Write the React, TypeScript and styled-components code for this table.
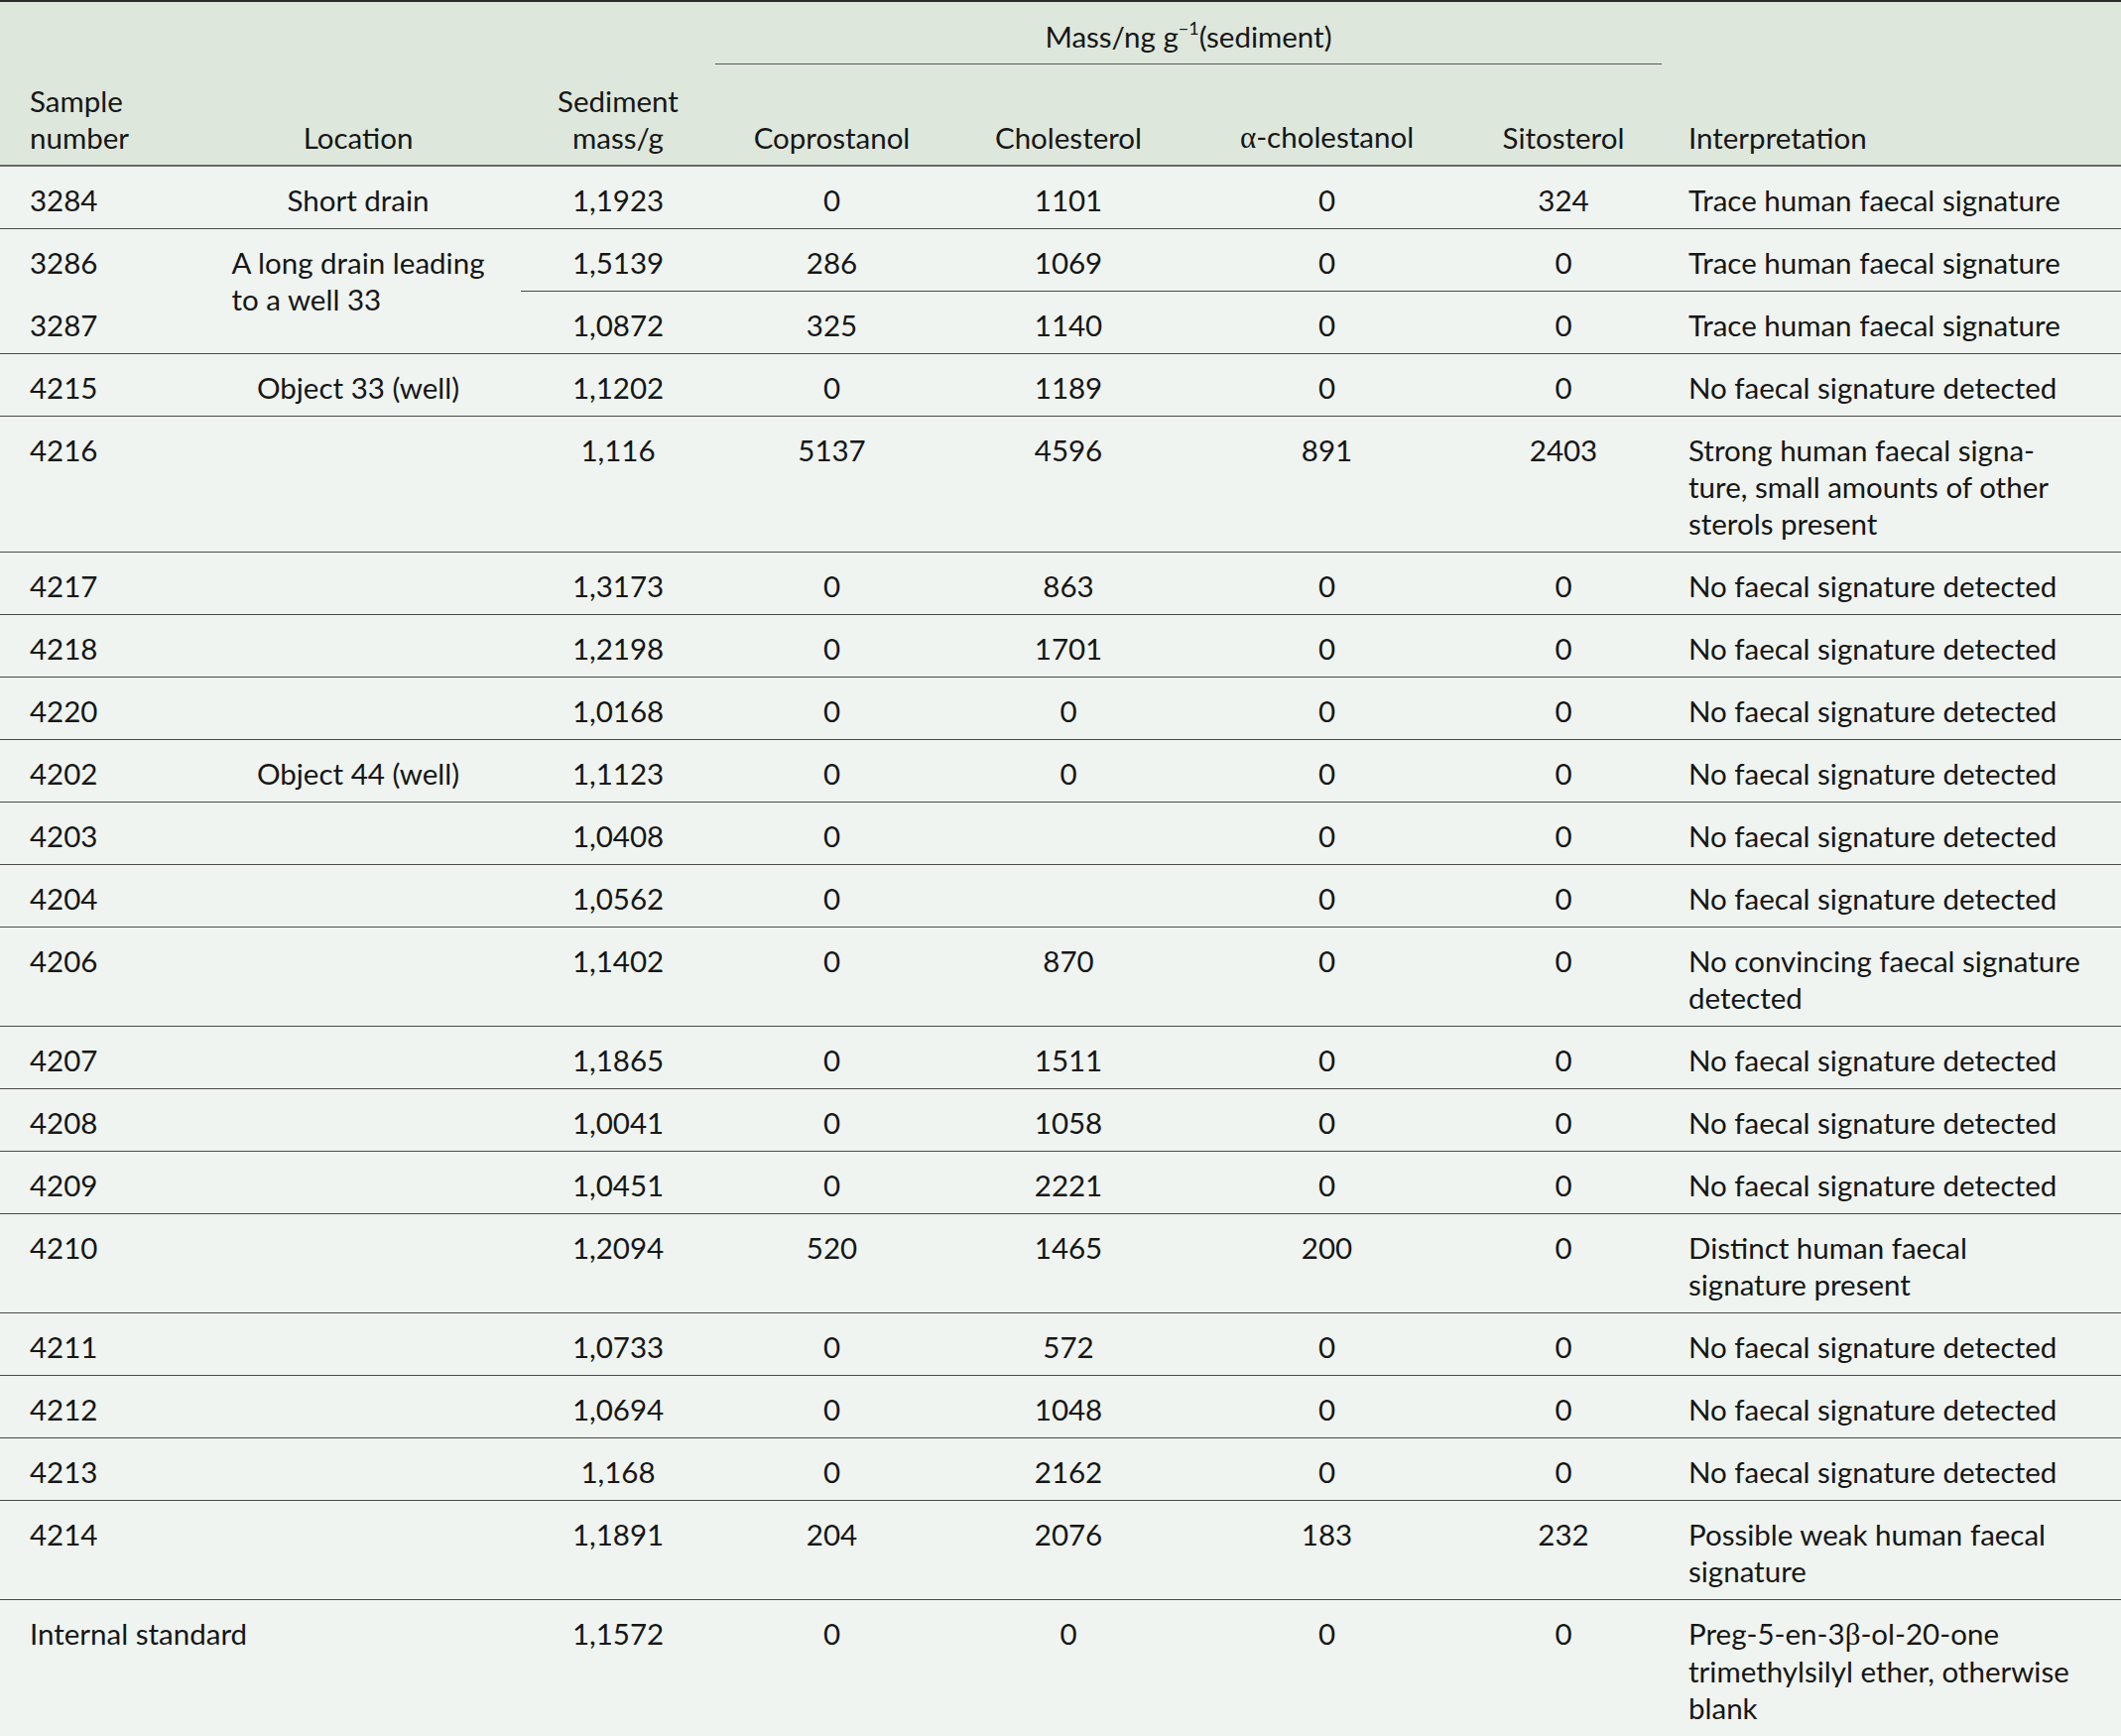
import React from "react";
import styled, { createGlobalStyle } from "styled-components";

const Global = createGlobalStyle`
  html, body { margin: 0; padding: 0; background: #ffffff; }
  body { font-family: "Lato", "Liberation Sans", sans-serif; color: #161616; }
`;

const Table = styled.div`
  display: grid;
  grid-template-columns: 197px 328px 196px 235px 242px 279px 198px 1fr;
  width: 2138px;
  border-top: 2px solid #2b2b2b;
  font-size: 29.5px;
  line-height: 37px;
`;

type Align = "left" | "center";

const HeadCell = styled.div<{ $align: Align; $pl?: number; $rowspan?: boolean }>`
  background: #dee7dc;
  padding: 0 ${(p) => (p.$align === "left" ? "8px" : "0")} 9px ${(p) => (p.$pl ?? 0)}px;
  display: flex;
  flex-direction: column;
  justify-content: flex-end;
  text-align: ${(p) => p.$align};
  border-bottom: 2px solid #676767;
  ${(p) => (p.$rowspan ? "grid-row: span 2;" : "")}
  min-height: 92px;
  white-space: nowrap;
`;

const SpanHead = styled.div`
  grid-column: 4 / span 4;
  background: #dee7dc;
  text-align: center;
  padding: 16px 0 9px;
  border-bottom: 1px solid #5a5a5a;
  white-space: nowrap;
`;

const Sup = styled.sup`
  font-size: 18px;
  line-height: 0;
  position: relative;
  top: -2px;
  vertical-align: super;
`;

const Cell = styled.div<{
  $align: Align;
  $pl?: number;
  $rows?: number;
  $cols?: number;
  $last?: boolean;
  $open?: boolean;
}>`
  background: #eff4f0;
  padding: 15px ${(p) => (p.$align === "left" ? "8px" : "0")} 10px ${(p) => (p.$pl ?? 0)}px;
  text-align: ${(p) => p.$align};
  border-bottom: ${(p) =>
    p.$last ? "3px solid #161616" : p.$open ? "1px solid transparent" : "1px solid #4a4a4a"};
  white-space: nowrap;
  ${(p) => (p.$rows ? `grid-row: span ${p.$rows};` : "")}
  ${(p) => (p.$cols ? `grid-column: span ${p.$cols};` : "")}
`;

const LocBlock = styled.span`
  display: inline-block;
  text-align: left;
`;

const Greek = styled.span`
  font-family: "Liberation Serif", "DejaVu Serif", serif;
  font-size: 31px;
`;

type Row = {
  n: string;
  loc?: React.ReactNode;
  locRows?: number;
  skipLoc?: boolean;
  wide?: boolean;
  open?: boolean;
  mass: string;
  c: string;
  ch: string;
  a: string;
  s: string;
  interp: React.ReactNode[];
};

const NO = ["No faecal signature detected"];
const TRACE = ["Trace human faecal signature"];

const rows: Row[] = [
  { n: "3284", loc: "Short drain", mass: "1,1923", c: "0", ch: "1101", a: "0", s: "324", interp: TRACE },
  {
    n: "3286",
    open: true,
    loc: (
      <LocBlock>
        A long drain leading
        <br />
        to a well 33
      </LocBlock>
    ),
    locRows: 2,
    mass: "1,5139",
    c: "286",
    ch: "1069",
    a: "0",
    s: "0",
    interp: TRACE,
  },
  { n: "3287", skipLoc: true, mass: "1,0872", c: "325", ch: "1140", a: "0", s: "0", interp: TRACE },
  { n: "4215", loc: "Object 33 (well)", mass: "1,1202", c: "0", ch: "1189", a: "0", s: "0", interp: NO },
  {
    n: "4216",
    mass: "1,116",
    c: "5137",
    ch: "4596",
    a: "891",
    s: "2403",
    interp: ["Strong human faecal signa-", "ture, small amounts of other", "sterols present"],
  },
  { n: "4217", mass: "1,3173", c: "0", ch: "863", a: "0", s: "0", interp: NO },
  { n: "4218", mass: "1,2198", c: "0", ch: "1701", a: "0", s: "0", interp: NO },
  { n: "4220", mass: "1,0168", c: "0", ch: "0", a: "0", s: "0", interp: NO },
  { n: "4202", loc: "Object 44 (well)", mass: "1,1123", c: "0", ch: "0", a: "0", s: "0", interp: NO },
  { n: "4203", mass: "1,0408", c: "0", ch: "", a: "0", s: "0", interp: NO },
  { n: "4204", mass: "1,0562", c: "0", ch: "", a: "0", s: "0", interp: NO },
  {
    n: "4206",
    mass: "1,1402",
    c: "0",
    ch: "870",
    a: "0",
    s: "0",
    interp: ["No convincing faecal signature", "detected"],
  },
  { n: "4207", mass: "1,1865", c: "0", ch: "1511", a: "0", s: "0", interp: NO },
  { n: "4208", mass: "1,0041", c: "0", ch: "1058", a: "0", s: "0", interp: NO },
  { n: "4209", mass: "1,0451", c: "0", ch: "2221", a: "0", s: "0", interp: NO },
  {
    n: "4210",
    mass: "1,2094",
    c: "520",
    ch: "1465",
    a: "200",
    s: "0",
    interp: ["Distinct human faecal", "signature present"],
  },
  { n: "4211", mass: "1,0733", c: "0", ch: "572", a: "0", s: "0", interp: NO },
  { n: "4212", mass: "1,0694", c: "0", ch: "1048", a: "0", s: "0", interp: NO },
  { n: "4213", mass: "1,168", c: "0", ch: "2162", a: "0", s: "0", interp: NO },
  {
    n: "4214",
    mass: "1,1891",
    c: "204",
    ch: "2076",
    a: "183",
    s: "232",
    interp: ["Possible weak human faecal", "signature"],
  },
  {
    n: "Internal standard",
    wide: true,
    mass: "1,1572",
    c: "0",
    ch: "0",
    a: "0",
    s: "0",
    interp: [
      <React.Fragment key="p">
        Preg-5-en-3<Greek>β</Greek>-ol-20-one
      </React.Fragment>,
      "trimethylsilyl ether, otherwise",
      "blank",
    ],
  },
];

const Lines: React.FC<{ lines: React.ReactNode[] }> = ({ lines }) => (
  <>
    {lines.map((l, i) => (
      <React.Fragment key={i}>
        {i > 0 && <br />}
        {l}
      </React.Fragment>
    ))}
  </>
);

export default function App() {
  return (
    <>
      <Global />
      <Table>
        <HeadCell $align="left" $pl={30} $rowspan>
          <div>Sample</div>
          <div>number</div>
        </HeadCell>
        <HeadCell $align="center" $rowspan>
          Location
        </HeadCell>
        <HeadCell $align="center" $rowspan>
          <div>Sediment</div>
          <div>mass/g</div>
        </HeadCell>
        <SpanHead>
          Mass/ng g<Sup>−1</Sup>(sediment)
        </SpanHead>
        <HeadCell $align="left" $pl={27} $rowspan>
          Interpretation
        </HeadCell>
        <HeadCell $align="center">Coprostanol</HeadCell>
        <HeadCell $align="center">Cholesterol</HeadCell>
        <HeadCell $align="center">
          <span>
            <Greek>α</Greek>-cholestanol
          </span>
        </HeadCell>
        <HeadCell $align="center">Sitosterol</HeadCell>

        {rows.map((r, i) => {
          const last = i === rows.length - 1;
          return (
            <React.Fragment key={r.n}>
              <Cell
                $align="left"
                $pl={30}
                $cols={r.wide ? 2 : undefined}
                $last={last}
                $open={r.open}
              >
                {r.n}
              </Cell>
              {!r.wide && !r.skipLoc && (
                <Cell $align="center" $rows={r.locRows} $last={last}>
                  {r.loc ?? ""}
                </Cell>
              )}
              <Cell $align="center" $last={last}>{r.mass}</Cell>
              <Cell $align="center" $last={last}>{r.c}</Cell>
              <Cell $align="center" $last={last}>{r.ch}</Cell>
              <Cell $align="center" $last={last}>{r.a}</Cell>
              <Cell $align="center" $last={last}>{r.s}</Cell>
              <Cell $align="left" $pl={27} $last={last}>
                <Lines lines={r.interp} />
              </Cell>
            </React.Fragment>
          );
        })}
      </Table>
    </>
  );
}
